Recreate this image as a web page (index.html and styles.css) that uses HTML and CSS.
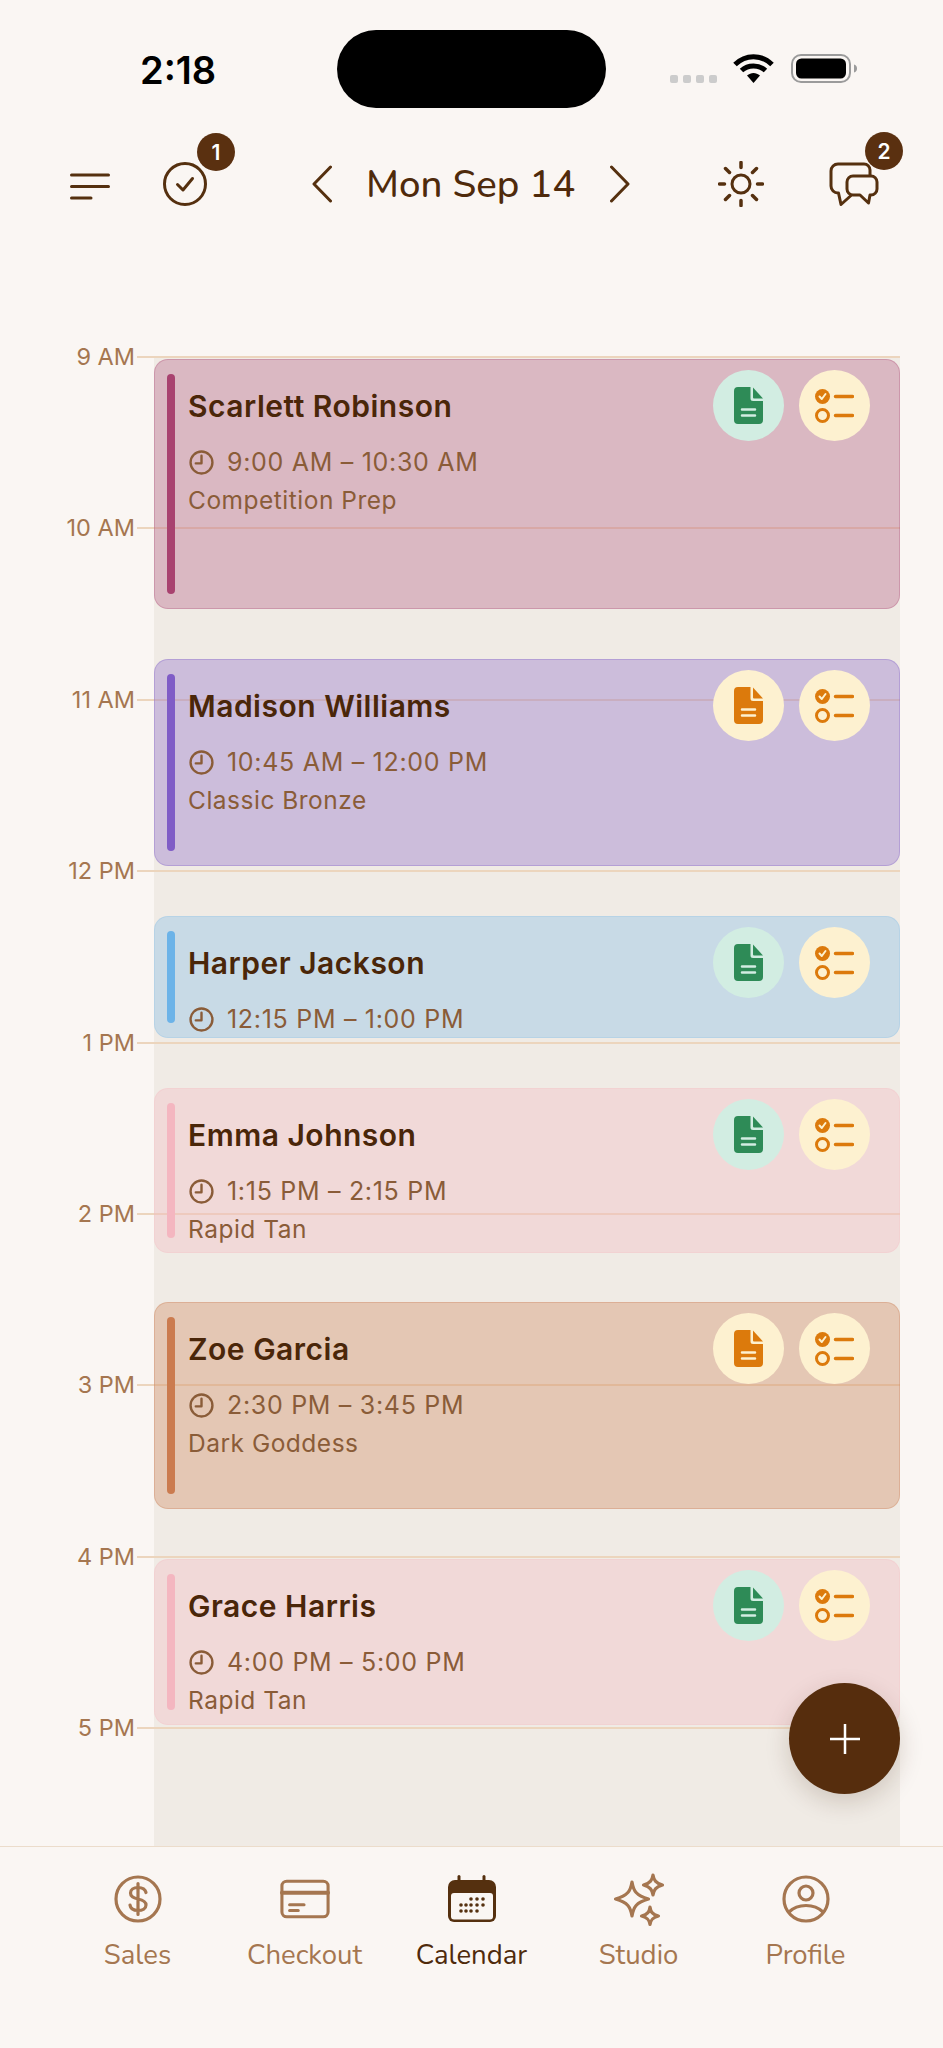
FILE: index.html
```html
<!DOCTYPE html>
<html lang="en">
<head>
<meta charset="utf-8">
<title>Calendar</title>
<link rel="stylesheet" href="styles.css">
</head>
<body>
<div class="app">
  <div class="status">
    <span class="clock">2:18</span>
    <div class="island"></div>
    <div class="signal"><i></i><i></i><i></i><i></i></div>
    <svg class="wifi" viewBox="0 0 41 29"><path d="M2 10.5C12.5 0 28.500 0 39 10.500" fill="none" stroke="#000" stroke-width="5"/><path d="M8.500 16.500C15 10.500 26 10.500 32.500 16.500" fill="none" stroke="#000" stroke-width="5"/><path d="M14 21.500L20.500 29L27 21.500C23 18 18 18 14 21.500Z" fill="#000"/></svg>
    <svg class="battery" viewBox="0 0 66 29"><rect x="1" y="1" width="58" height="27" rx="9" fill="none" stroke="#9b9b9b" stroke-width="2"/><rect x="5" y="4.500" width="50" height="20" rx="5.500" fill="#000"/><path d="M63 10.500c2 .5 3 2 3 4s-1 3.500-3 4z" fill="#9b9b9b"/></svg>
  </div>

  <header class="topbar">
    <svg class="ic menu" viewBox="0 0 40 44"><path d="M1.500 13H38.500M1.500 24.500H38.500M1.500 36H21" stroke-width="3"/></svg>
    <div class="badged tasks">
      <svg class="ic check" viewBox="0 0 44 44"><circle cx="22" cy="22" r="20.500" stroke-width="3"/><path d="M14.500 22.500L20 28L29.500 16.500" stroke-width="3"/></svg>
      <span class="badge b-task">1</span>
    </div>
    <svg class="ic chev-l" viewBox="0 0 20 44"><path d="M18.500 5L2 22L18.500 39" stroke-width="3"/></svg>
    <h1 class="date">Mon Sep 14</h1>
    <svg class="ic chev-r" viewBox="0 0 20 44"><path d="M1.500 5L18 22L1.500 39" stroke-width="3"/></svg>
    <svg class="ic sun" viewBox="0 0 46 46"><circle cx="23" cy="23" r="9" stroke-width="3"/><path d="M23 1.500V6.500M23 39.500V44.500M1.500 23H6.500M39.500 23H44.500M7.500 7.500L11.500 11.500M34.500 34.500L38.500 38.500M7.500 38.500L11.500 34.500M34.500 11.500L38.500 7.500" stroke-width="3.500"/></svg>
    <div class="badged chat">
      <svg class="ic chatic" viewBox="0 0 50 46"><path d="M41 14V9a6 6 0 0 0-6-6H9a7 7 0 0 0-7 7V25a7 7 0 0 0 7 7H9.500L12 43.500L22 34.500" stroke-width="3"/><path d="M24 15H42a6 6 0 0 1 6 6V28a6 6 0 0 1-6 6H41L39.500 42L31 34H24a6 6 0 0 1-6-6V21a6 6 0 0 1 6-6Z" stroke-width="3"/></svg>
      <span class="badge b-chat">2</span>
    </div>
  </header>

  <main class="timeline">
    <div class="lane"></div>
    <div class="hour"><span class="hour-label">9 AM</span><span class="hour-line"></span></div>
    <div class="hour"><span class="hour-label">10 AM</span><span class="hour-line"></span></div>
    <div class="hour"><span class="hour-label">11 AM</span><span class="hour-line"></span></div>
    <div class="hour"><span class="hour-label">12 PM</span><span class="hour-line"></span></div>
    <div class="hour"><span class="hour-label">1 PM</span><span class="hour-line"></span></div>
    <div class="hour"><span class="hour-label">2 PM</span><span class="hour-line"></span></div>
    <div class="hour"><span class="hour-label">3 PM</span><span class="hour-line"></span></div>
    <div class="hour"><span class="hour-label">4 PM</span><span class="hour-line"></span></div>
    <div class="hour"><span class="hour-label">5 PM</span><span class="hour-line"></span></div>

    <div class="events">
      <article class="event berry" style="top:3px;height:250px">
        <div class="bar"></div>
        <div class="info">
          <div class="name">Scarlett Robinson</div>
          <div class="time"><svg class="clock-ic" viewBox="0 0 24 24"><circle cx="12" cy="12" r="10.500"/><path d="M12 5.500V12.800H6.500"/></svg>9:00 AM – 10:30 AM</div>
          <div class="service">Competition Prep</div>
        </div>
        <div class="actions">
          <span class="act green"><svg class="doc" viewBox="0 0 29 37"><path class="fill" d="M4 0H16.500V11.500A2.500 2.500 0 0 0 19 14H29V33A4 4 0 0 1 25 37H4A4 4 0 0 1 0 33V4A4 4 0 0 1 4 0Z"/><path class="fill" d="M19 .5L29 11.500H20A1 1 0 0 1 19 10.500Z"/><path class="cut" d="M8 22.500H21M8 28.500H21"/></svg></span>
          <span class="act amber"><svg class="list" viewBox="0 0 39 34"><circle class="fill" cx="7.500" cy="7.500" r="7.500"/><path class="tick" d="M4.500 7.500L6.800 10L10.500 5"/><circle class="ring" cx="7.500" cy="26.500" r="6"/><path class="rule" d="M20.500 7.500H37.500M20.500 26.500H37.500"/></svg></span>
        </div>
      </article>

      <article class="event violet" style="top:303px;height:207px">
        <div class="bar"></div>
        <div class="info">
          <div class="name">Madison Williams</div>
          <div class="time"><svg class="clock-ic" viewBox="0 0 24 24"><circle cx="12" cy="12" r="10.500"/><path d="M12 5.500V12.800H6.500"/></svg>10:45 AM – 12:00 PM</div>
          <div class="service">Classic Bronze</div>
        </div>
        <div class="actions">
          <span class="act amber"><svg class="doc" viewBox="0 0 29 37"><path class="fill" d="M4 0H16.500V11.500A2.500 2.500 0 0 0 19 14H29V33A4 4 0 0 1 25 37H4A4 4 0 0 1 0 33V4A4 4 0 0 1 4 0Z"/><path class="fill" d="M19 .5L29 11.500H20A1 1 0 0 1 19 10.500Z"/><path class="cut" d="M8 22.500H21M8 28.500H21"/></svg></span>
          <span class="act amber"><svg class="list" viewBox="0 0 39 34"><circle class="fill" cx="7.500" cy="7.500" r="7.500"/><path class="tick" d="M4.500 7.500L6.800 10L10.500 5"/><circle class="ring" cx="7.500" cy="26.500" r="6"/><path class="rule" d="M20.500 7.500H37.500M20.500 26.500H37.500"/></svg></span>
        </div>
      </article>

      <article class="event sky" style="top:560px;height:122px">
        <div class="bar"></div>
        <div class="info">
          <div class="name">Harper Jackson</div>
          <div class="time"><svg class="clock-ic" viewBox="0 0 24 24"><circle cx="12" cy="12" r="10.500"/><path d="M12 5.500V12.800H6.500"/></svg>12:15 PM – 1:00 PM</div>
        </div>
        <div class="actions">
          <span class="act green"><svg class="doc" viewBox="0 0 29 37"><path class="fill" d="M4 0H16.500V11.500A2.500 2.500 0 0 0 19 14H29V33A4 4 0 0 1 25 37H4A4 4 0 0 1 0 33V4A4 4 0 0 1 4 0Z"/><path class="fill" d="M19 .5L29 11.500H20A1 1 0 0 1 19 10.500Z"/><path class="cut" d="M8 22.500H21M8 28.500H21"/></svg></span>
          <span class="act amber"><svg class="list" viewBox="0 0 39 34"><circle class="fill" cx="7.500" cy="7.500" r="7.500"/><path class="tick" d="M4.500 7.500L6.800 10L10.500 5"/><circle class="ring" cx="7.500" cy="26.500" r="6"/><path class="rule" d="M20.500 7.500H37.500M20.500 26.500H37.500"/></svg></span>
        </div>
      </article>

      <article class="event blush" style="top:732px;height:165px">
        <div class="bar"></div>
        <div class="info">
          <div class="name">Emma Johnson</div>
          <div class="time"><svg class="clock-ic" viewBox="0 0 24 24"><circle cx="12" cy="12" r="10.500"/><path d="M12 5.500V12.800H6.500"/></svg>1:15 PM – 2:15 PM</div>
          <div class="service">Rapid Tan</div>
        </div>
        <div class="actions">
          <span class="act green"><svg class="doc" viewBox="0 0 29 37"><path class="fill" d="M4 0H16.500V11.500A2.500 2.500 0 0 0 19 14H29V33A4 4 0 0 1 25 37H4A4 4 0 0 1 0 33V4A4 4 0 0 1 4 0Z"/><path class="fill" d="M19 .5L29 11.500H20A1 1 0 0 1 19 10.500Z"/><path class="cut" d="M8 22.500H21M8 28.500H21"/></svg></span>
          <span class="act amber"><svg class="list" viewBox="0 0 39 34"><circle class="fill" cx="7.500" cy="7.500" r="7.500"/><path class="tick" d="M4.500 7.500L6.800 10L10.500 5"/><circle class="ring" cx="7.500" cy="26.500" r="6"/><path class="rule" d="M20.500 7.500H37.500M20.500 26.500H37.500"/></svg></span>
        </div>
      </article>

      <article class="event clay" style="top:946px;height:207px">
        <div class="bar"></div>
        <div class="info">
          <div class="name">Zoe Garcia</div>
          <div class="time"><svg class="clock-ic" viewBox="0 0 24 24"><circle cx="12" cy="12" r="10.500"/><path d="M12 5.500V12.800H6.500"/></svg>2:30 PM – 3:45 PM</div>
          <div class="service">Dark Goddess</div>
        </div>
        <div class="actions">
          <span class="act amber"><svg class="doc" viewBox="0 0 29 37"><path class="fill" d="M4 0H16.500V11.500A2.500 2.500 0 0 0 19 14H29V33A4 4 0 0 1 25 37H4A4 4 0 0 1 0 33V4A4 4 0 0 1 4 0Z"/><path class="fill" d="M19 .5L29 11.500H20A1 1 0 0 1 19 10.500Z"/><path class="cut" d="M8 22.500H21M8 28.500H21"/></svg></span>
          <span class="act amber"><svg class="list" viewBox="0 0 39 34"><circle class="fill" cx="7.500" cy="7.500" r="7.500"/><path class="tick" d="M4.500 7.500L6.800 10L10.500 5"/><circle class="ring" cx="7.500" cy="26.500" r="6"/><path class="rule" d="M20.500 7.500H37.500M20.500 26.500H37.500"/></svg></span>
        </div>
      </article>

      <article class="event blush" style="top:1203px;height:166px">
        <div class="bar"></div>
        <div class="info">
          <div class="name">Grace Harris</div>
          <div class="time"><svg class="clock-ic" viewBox="0 0 24 24"><circle cx="12" cy="12" r="10.500"/><path d="M12 5.500V12.800H6.500"/></svg>4:00 PM – 5:00 PM</div>
          <div class="service">Rapid Tan</div>
        </div>
        <div class="actions">
          <span class="act green"><svg class="doc" viewBox="0 0 29 37"><path class="fill" d="M4 0H16.500V11.500A2.500 2.500 0 0 0 19 14H29V33A4 4 0 0 1 25 37H4A4 4 0 0 1 0 33V4A4 4 0 0 1 4 0Z"/><path class="fill" d="M19 .5L29 11.500H20A1 1 0 0 1 19 10.500Z"/><path class="cut" d="M8 22.500H21M8 28.500H21"/></svg></span>
          <span class="act amber"><svg class="list" viewBox="0 0 39 34"><circle class="fill" cx="7.500" cy="7.500" r="7.500"/><path class="tick" d="M4.500 7.500L6.800 10L10.500 5"/><circle class="ring" cx="7.500" cy="26.500" r="6"/><path class="rule" d="M20.500 7.500H37.500M20.500 26.500H37.500"/></svg></span>
        </div>
      </article>
    </div>

    <button class="fab" aria-label="Add"><svg viewBox="0 0 30 30"><path d="M15 0V30M0 15H30"/></svg></button>
  </main>

  <nav class="tabs">
    <a class="tab">
      <svg class="tab-ic" viewBox="0 0 50 50"><circle cx="25" cy="25" r="22"/><path d="M33 18.500C32 14.500 28.500 13.500 25 13.500C20.500 13.500 17.500 15.500 17.500 19C17.500 22.500 20.500 24 25 25C29.500 26 33 27.500 33 31C33 34.500 29.500 36.500 25 36.500C21 36.500 17.500 35 17 31M25 9.500V40.500"/></svg>
      <span>Sales</span>
    </a>
    <a class="tab">
      <svg class="tab-ic" viewBox="0 0 52 50"><rect x="2" y="6.500" width="48" height="37" rx="5"/><path d="M2 18.500H50" stroke-width="4"/><path d="M10 31H25M10 37H19"/></svg>
      <span>Checkout</span>
    </a>
    <a class="tab active">
      <svg class="tab-ic cal" viewBox="0 0 50 50"><path class="solid" d="M8 6H42A7 7 0 0 1 49 13V42A6 6 0 0 1 43 48H7A6 6 0 0 1 1 42V13A7 7 0 0 1 8 6Z"/><rect class="paper" x="4" y="19" width="42" height="26.500" rx="3"/><rect class="solid" x="10.500" y="1" width="3" height="7" rx="1.500"/><rect class="solid" x="35.500" y="1" width="3" height="7" rx="1.500"/><g class="solid"><circle cx="24" cy="25" r="1.800"/><circle cx="30" cy="25" r="1.800"/><circle cx="36" cy="25" r="1.800"/><circle cx="14" cy="31" r="1.800"/><circle cx="19" cy="31" r="1.800"/><circle cx="24" cy="31" r="1.800"/><circle cx="30" cy="31" r="1.800"/><circle cx="36" cy="31" r="1.800"/><circle cx="14" cy="37" r="1.800"/><circle cx="19" cy="37" r="1.800"/><circle cx="24" cy="37" r="1.800"/><circle cx="30" cy="37" r="1.800"/></g></svg>
      <span>Calendar</span>
    </a>
    <a class="tab">
      <svg class="tab-ic" viewBox="0 -1 50 50"><path d="M18 7C19.500 16 22 20.500 34.500 24C22 27.500 19.500 32 18 41C16.500 32 14 27.500 1.500 24C14 20.500 16.500 16 18 7Z"/><path d="M39 0C39.800 5 41.500 8 48.500 10C41.500 12 39.800 15 39 20C38.200 15 36.500 12 29.500 10C36.500 8 38.200 5 39 0Z"/><path d="M36 32C36.700 36.500 38 39.500 44.500 41C38 42.500 36.700 45.500 36 49.500C35.300 45.500 34 42.500 27.500 41C34 39.500 35.300 36.500 36 32Z"/></svg>
      <span>Studio</span>
    </a>
    <a class="tab">
      <svg class="tab-ic" viewBox="0 0 50 50"><circle cx="25" cy="25" r="22"/><circle cx="25" cy="19" r="7"/><path d="M8 38C13 33 18 31.500 25 31.500C32 31.500 37 33 42 38"/></svg>
      <span>Profile</span>
    </a>
  </nav>
</div>
</body>
</html>
```
FILE: styles.css
```css
* { box-sizing: border-box; }
html, body { margin: 0; padding: 0; }
body { background: #faf6f3; font-family: "Inter", "Liberation Sans", sans-serif; color: #4a2609; }

.app { width: 943px; height: 2048px; display: flex; flex-direction: column; overflow: hidden; background: #faf6f3; }

/* status bar */
.status { height: 108px; padding-top: 30px; display: flex; align-items: flex-start; position: relative; }
.clock { margin: 18px 0 0 140px; width: 197px; font-size: 38px; line-height: 44px; font-weight: 600; color: #000; }
.island { width: 269px; height: 78px; border-radius: 39px; background: #000; }
.signal { margin: 45px 0 0 64px; display: flex; gap: 5px; }
.signal i { width: 8px; height: 8px; border-radius: 2px; background: #ccc; }
.wifi { width: 41px; height: 29px; margin: 24px 0 0 16px; }
.battery { width: 66px; height: 29px; margin: 24px 0 0 17px; }

/* top bar */
.topbar { height: 44px; margin-top: 54px; display: flex; align-items: center; padding-left: 70px; }
.ic { display: block; fill: none; stroke: #55300f; stroke-linecap: round; stroke-linejoin: round; }
.menu { width: 40px; height: 44px; margin-top: -1px; }
.badged { position: relative; }
.tasks { margin-left: 53px; }
.check { width: 44px; height: 44px; }
.badge { position: absolute; width: 38px; height: 38px; border-radius: 50%; background: #5a3010; color: #fff; font-size: 21px; font-weight: 600; display: flex; align-items: center; justify-content: center; }
.b-task { left: 34px; top: -29px; }
.b-chat { left: 36px; top: -29px; }
.chev-l { width: 20px; height: 44px; margin-left: 105px; }
.date { margin: 2px 0 0 34px; width: 210px; font: 500 38.400px/44px "Nunito", "Lato", sans-serif; color: #4f2a0b; white-space: nowrap; }
.chev-r { width: 20px; height: 44px; margin-left: 34px; }
.sun { width: 46px; height: 46px; margin-left: 88px; }
.chat { margin-left: 65px; }
.chatic { width: 50px; height: 46px; }

/* timeline */
.timeline { position: relative; height: 1490px; margin-top: 150px; }
.lane { position: absolute; left: 154px; width: 746px; top: 0; bottom: 0; background: #f0ebe5; }
.hour { position: relative; height: 171.4px; display: flex; align-items: flex-start; }
.hour-label { width: 135px; text-align: right; font-size: 23.500px; line-height: 2px; color: #a57650; white-space: nowrap; }
.hour-line { width: 763px; margin-left: 2px; height: 2px; background: #ecd5bd; }

.events { position: absolute; left: 154px; width: 746px; top: 0; bottom: 0; }
.event { position: absolute; left: 0; right: 0; display: flex; padding: 14px 0 14px 12px; border: 1px solid; border-radius: 14px; overflow: hidden; }
.bar { flex: none; width: 8px; border-radius: 4px; background: var(--bar); }
.info { margin-left: 13px; min-width: 0; }
.name { margin-top: 14px; font-size: 30px; line-height: 36px; font-weight: 600; letter-spacing: .5px; color: #4a2609; white-space: nowrap; }
.time { margin-top: 20px; display: flex; align-items: center; gap: 13px; font-size: 25px; line-height: 36px; letter-spacing: .7px; color: #8a5c38; white-space: nowrap; }
.clock-ic { width: 25px; height: 25px; margin-left: 1px; fill: none; stroke: #8a5c38; stroke-width: 2.300; stroke-linecap: round; stroke-linejoin: round; }
.service { margin-top: 2px; font-size: 24.500px; line-height: 36px; letter-spacing: .5px; color: #8a5c38; white-space: nowrap; }

.berry { --bar: #a8426f; background: rgba(168, 66, 111, .3); border-color: rgba(168, 66, 111, .28); }
.violet { --bar: #7f5cc6; background: rgba(127, 92, 198, .32); border-color: rgba(127, 92, 198, .3); }
.sky { --bar: #6cb3e8; background: rgba(108, 179, 232, .3); border-color: rgba(108, 179, 232, .2); }
.blush { --bar: #f4b6c0; background: rgba(244, 182, 192, .35); border-color: rgba(244, 182, 192, .2); }
.clay { --bar: #cb7b4f; background: rgba(203, 123, 79, .32); border-color: rgba(203, 123, 79, .3); }

.actions { position: absolute; top: 10px; right: 29px; display: flex; gap: 15px; }
.act { width: 71px; height: 71px; border-radius: 50%; display: flex; align-items: center; justify-content: center; --tone: #dc7a0c; }
.green { background: #d2ede2; --tone: #2e8b57; }
.amber { background: #fdf1d0; --tone: #dc7a0c; }
.doc { width: 29px; height: 37px; }
.list { width: 39px; height: 34px; }
.fill { fill: var(--tone); }
.cut { fill: none; stroke: #fdf1d0; stroke-width: 2.500; stroke-linecap: round; }
.green .cut { stroke: #d2ede2; }
.tick { fill: none; stroke: #fdf1d0; stroke-width: 2; stroke-linecap: round; stroke-linejoin: round; }
.ring { fill: none; stroke: var(--tone); stroke-width: 3; }
.rule { fill: none; stroke: var(--tone); stroke-width: 3.500; stroke-linecap: round; }

.fab { position: absolute; left: 789px; top: 1327px; width: 111px; height: 111px; border: 0; padding: 0; border-radius: 50%; background: #562d0d; display: flex; align-items: center; justify-content: center; box-shadow: 0 8px 24px rgba(60, 35, 10, .18); }
.fab svg { width: 30px; height: 30px; fill: none; stroke: #fff; stroke-width: 2.500; }

/* tab bar */
.tabs { height: 202px; border-top: 1px solid #ecdccb; padding: 27px 54px 0; display: grid; grid-template-columns: repeat(5, 1fr); background: #faf6f3; }
.tab { display: flex; flex-direction: column; align-items: center; color: #a57650; font: 400 27.500px/34px "Nunito", "Lato", sans-serif; }
.tab span { margin-top: 14px; }
.tab-ic { width: 50px; height: 50px; fill: none; stroke: #a57650; stroke-width: 3.200; stroke-linecap: round; stroke-linejoin: round; overflow: visible; }
.active { color: #4f2a0b; }
.cal { stroke: none; }
.solid { fill: #55300f; }
.paper { fill: #faf6f3; }
```
